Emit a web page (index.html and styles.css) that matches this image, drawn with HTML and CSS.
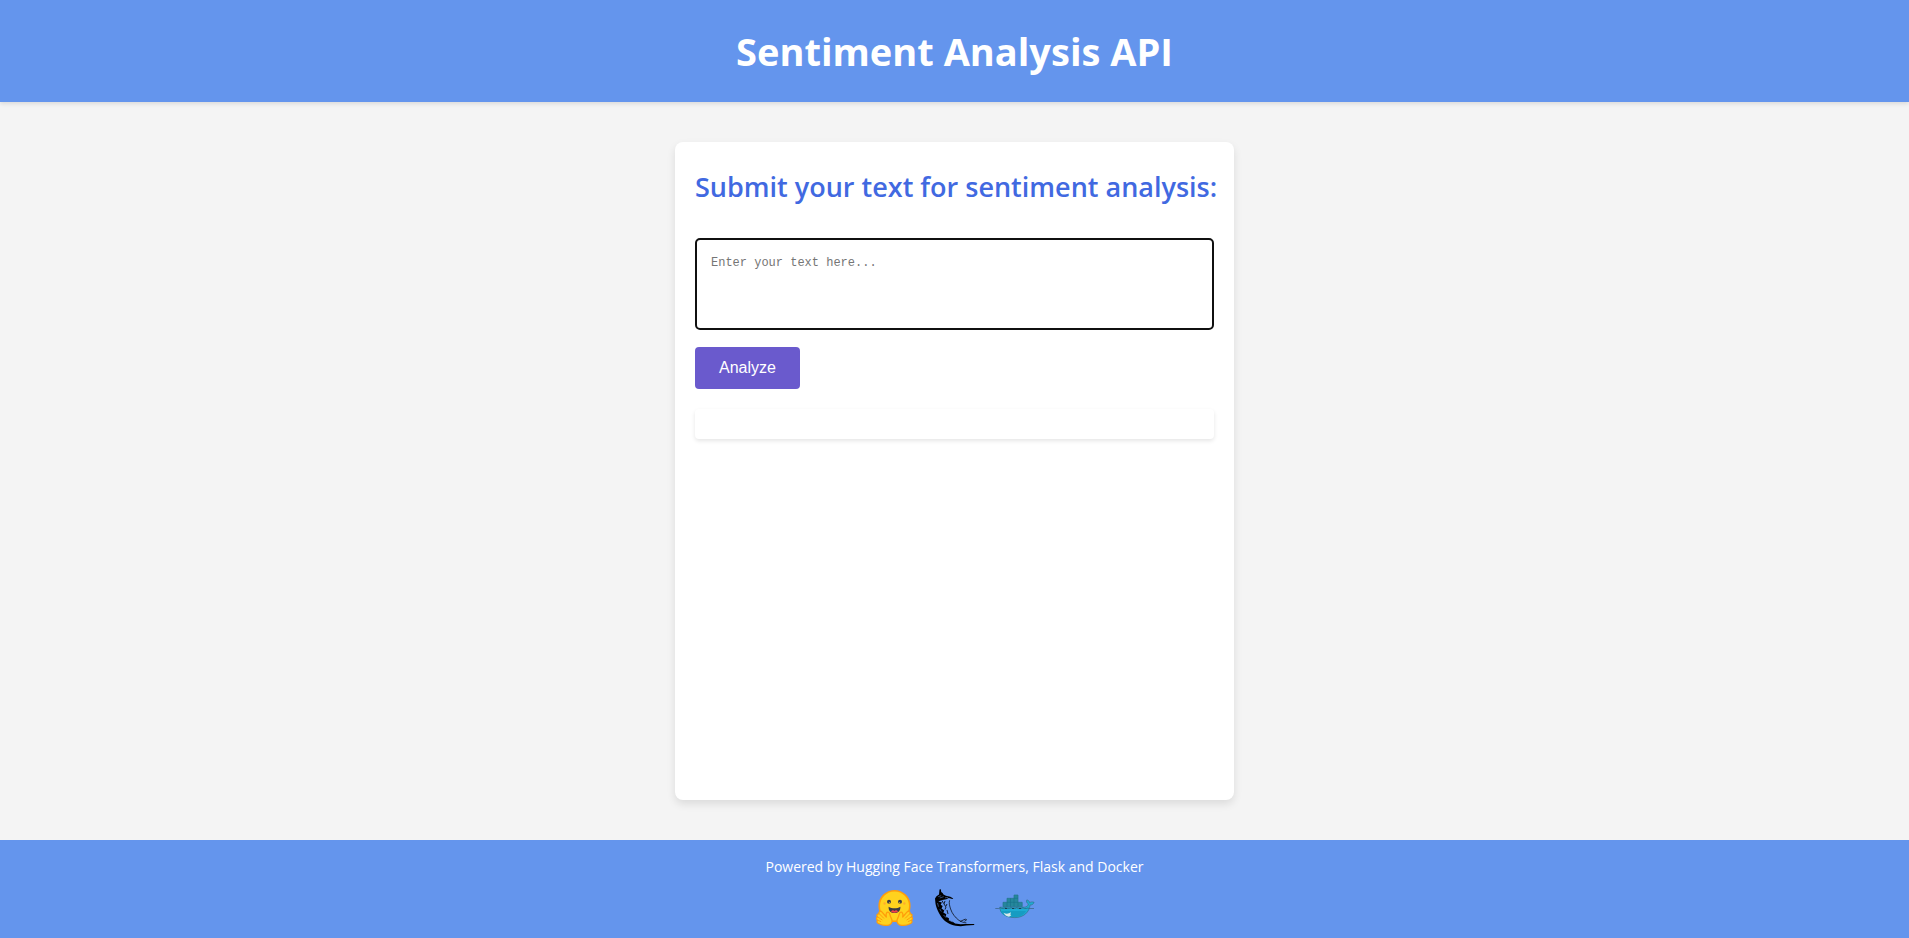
FILE: index.html
```html
<!DOCTYPE html>
<html lang="en">
<head>
<meta charset="utf-8">
<title>Sentiment Analysis API</title>
<link rel="stylesheet" href="styles.css">
</head>
<body>
<header class="header"><h1 class="title">Sentiment Analysis API</h1></header>
<main class="main">
  <section class="card">
    <form class="form">
      <h2 class="prompt"><label for="text">Submit your text for sentiment analysis:</label></h2>
      <textarea class="input" id="text" placeholder="Enter your text here..."></textarea>
      <button class="button" type="button">Analyze</button>
    </form>
    <div class="result"></div>
  </section>
</main>
<footer class="footer">
  <p class="powered">Powered by Hugging Face Transformers, Flask and Docker</p>
  <div class="logos">
    <svg class="logo" viewBox="1 0 40 40" role="img" aria-label="Hugging Face">
      <circle cx="20.5" cy="18" r="15.3" fill="#ffd21e" stroke="#ff9d0b" stroke-width="1.6"/>
      <circle cx="15" cy="13.800" r="2" fill="#3a3b45"/><circle cx="26" cy="13.800" r="2" fill="#3a3b45"/>
      <path d="M14.800 15.900l.2-2 1 .6zM26.200 15.900l-.2-2-1 .6z" fill="#ffd21e"/>
      <circle cx="10.600" cy="15.500" r="1.200" fill="#ffad2e"/><circle cx="30.400" cy="15.500" r="1.200" fill="#ffad2e"/>
      <path d="M14.600 18.700c3.600 2 8.200 2 11.800 0 .2 4-2 6.300-5.900 6.300s-6.100-2.300-5.900-6.300z" fill="#3a3b45"/>
      <path d="M17 23.700c.8-1.500 2.500-1.700 3.500-.8 1-.9 2.700-.7 3.500.8-2 1.500-5 1.500-7 0z" fill="#f43f46"/>
      <path id="hand" d="M4.500 35.500c-1.800-.8-1.900-2.400-.8-3.200-1.700-.9-1.600-2.700-.1-3.400-1.500-1.500-.3-3.400 1.500-3-.9-2.300 1.400-3.600 3-1.800l4.200 4.900c-.9-3.700.7-5.500 2.500-4.500 1.500.9.8 3.100 2.300 5.300 1.800 3 1 5.700-1.700 7-3.300 1.100-7.700.5-10.900-1.300z" fill="#ffd21e" stroke="#ff9d0b" stroke-width="1.300" stroke-linejoin="round"/>
      <path d="M5.300 25.800l4.600 4.600M3.800 29l4.600 3.100M3.900 32.300l3.200 1.400" stroke="#ff9d0b" fill="none"/>
      <use href="#hand" transform="matrix(-1 0 0 1 41 0)"/>
      <path d="M35.700 25.800l-4.600 4.600M37.200 29l-4.600 3.100M37.100 32.300l-3.200 1.400" stroke="#ff9d0b" fill="none"/>
    </svg>
    <svg class="logo" viewBox="0 0 40 40" role="img" aria-label="Flask">
      <path d="M4.500 1.500l1.400-.2.300 2.800 1.400.8.900 1.700 2.400 1.100 4.400 1 3 1.800-1 .5-3.500-1-2.500 1.300-4 .6-4 1.700 3.600.8-1.200 2.400 2 1.200-1.200 2.400 2.800 2-1 2 3 1.800-.6 2.200 3.200 1.800.2 2 4 1.700 2 1.700 5.500.6 4.600-.2 9 .1v1l-8 .4-5.500.7c-6.900-.2-13-2.300-17.500-7C3.800 25.800.7 19.300.3 13.700L0 10.500l1.500-2.200L4 6.500z"/>
      <path d="M14.600 12.300c-.9 2.700.2 6.200 1 8.700 1.500 4.600 4.600 8.500 8.300 11.300 2.200 1.500 4.700 2.300 7.500 2.600M25 33.500l5.600-2.500 1 1-2.200 1.300" fill="none" stroke="#000" stroke-width=".7"/>
      <path d="M7 12.500l1.500 3M10 13l-1 3 2 3-1 2.500M12 16l-1 2M12 22l1 4" fill="none" stroke="#000" stroke-width=".8"/>
      <path d="M3.200 8.700l3-1M4.700 10l4-1.300M10 9.800l3-.4M2.500 15l1 3.700M4.800 21l1.500 2.500M8.500 27l3 3M13.500 32l4 2" fill="none" stroke="#6495ed" stroke-width=".5"/>
    </svg>
    <svg class="logo" viewBox="0 0 40 40" role="img" aria-label="Docker">
      <path d="M4.800 19.200h24.500c2.400-.2 3.700-1.200 4-3.300-1.700-1-2.200-2.400-1.500-4 1.600.3 2.600 1.200 2.900 2.900 1-1 2.500-1.200 4.400-.5-.7 1.900-2 2.800-4 2.700-.7 6.900-6.200 12.600-15.200 12.600-8.300 0-15-3.300-15.100-10.400z" fill="#1dabd2" stroke="#326b80" stroke-width=".6"/>
      <path d="M5.500 23h25.500c-2.500 3.900-5.800 5.900-11.300 6.100-7.500.1-12.800-2-14.200-6.100z" fill="#169cc2"/>
      <path d="M8.500 24.700c2.600 1.600 5 1.300 7.500-.4l-.7 2.200 1 .8-2.300 1.500c-2.500-.5-4.300-1.800-5.500-4.100z" fill="#dce9e9"/>
      <path d="M8 14.300h4v-4h7v-3.300h4v7.300h4.200v4.300H8z" fill="#25879c" stroke="#24758a" stroke-width=".7"/>
      <path d="M12 14.300h11M12 14.300v4.300M15.500 10.300v8.300M19 10.300v8.300M23 14.300v4.300M19 10.300h4" fill="none" stroke="#19728b" stroke-width=".7"/>
      <path d="M.3 20.500h3.500l1.500-.7 1.500.7h2l1.700-.7 1.500.7h2.500l1.700-.7 1.500.7h2.500l1.500-.7 1.700.7h3l1.500-.7 1.500.7h2l1.500-.5 1.500.5H39" fill="none" stroke="#31586d" stroke-width=".6"/>
      <path d="M10 20.500h2M17 20.500h2M24 20.500h2" stroke="#173e51" stroke-width="1"/>
    </svg>
  </div>
</footer>
</body>
</html>
```
FILE: styles.css
```css
* { box-sizing: border-box; }
body {
  display: flex;
  flex-direction: column;
  min-height: 100vh;
  margin: 0;
  background: #f4f4f4;
  font-family: "Open Sans", "Noto Sans", sans-serif;
}
.header {
  padding: 24px 20px;
  background: #6495ed;
  color: #fff;
  text-align: center;
  box-shadow: 0 2px 4px rgba(0, 0, 0, 0.1);
}
.title {
  margin: 0;
  font-size: 38px;
  font-weight: 700;
  line-height: 54px;
}
.main {
  display: flex;
  flex: 1;
  justify-content: center;
  padding: 40px 20px;
}
.card {
  width: 100%;
  max-width: 559px;
  padding: 20px;
  border-radius: 8px;
  background: #fff;
  box-shadow: 0 4px 8px rgba(0, 0, 0, 0.1);
}
.form {
  display: flex;
  flex-direction: column;
  align-items: flex-start;
}
.prompt {
  margin: 0 0 26px;
  color: #4169e1;
  font-size: 27px;
  font-weight: 600;
  line-height: 50px;
  white-space: nowrap;
}
.input {
  width: 100%;
  height: 92px;
  margin: 0 0 17px;
  padding: 15px 14px;
  border: 2px solid #101010;
  border-radius: 5px;
  background: #fff;
  font-family: "Liberation Mono", monospace;
  font-size: 12px;
  line-height: 16px;
  resize: none;
}
.input::placeholder { color: #757575; }
.button {
  padding: 12px 24px;
  border: 0;
  border-radius: 4px;
  background: #6a5acd;
  color: #fff;
  font-family: "Liberation Sans", Arial, sans-serif;
  font-size: 16px;
  line-height: 18px;
}
.result {
  margin-top: 20px;
  padding: 15px;
  border-radius: 4px;
  box-shadow: 0 2px 4px rgba(0, 0, 0, 0.1);
}
.footer {
  padding: 16px 20px 10px;
  background: #6495ed;
  color: #fff;
  text-align: center;
}
.powered {
  margin: 0 0 10px;
  font-size: 14px;
  line-height: 22px;
}
.logos {
  display: flex;
  justify-content: center;
  gap: 20px;
}
.logo {
  width: 40px;
  height: 40px;
}
```
